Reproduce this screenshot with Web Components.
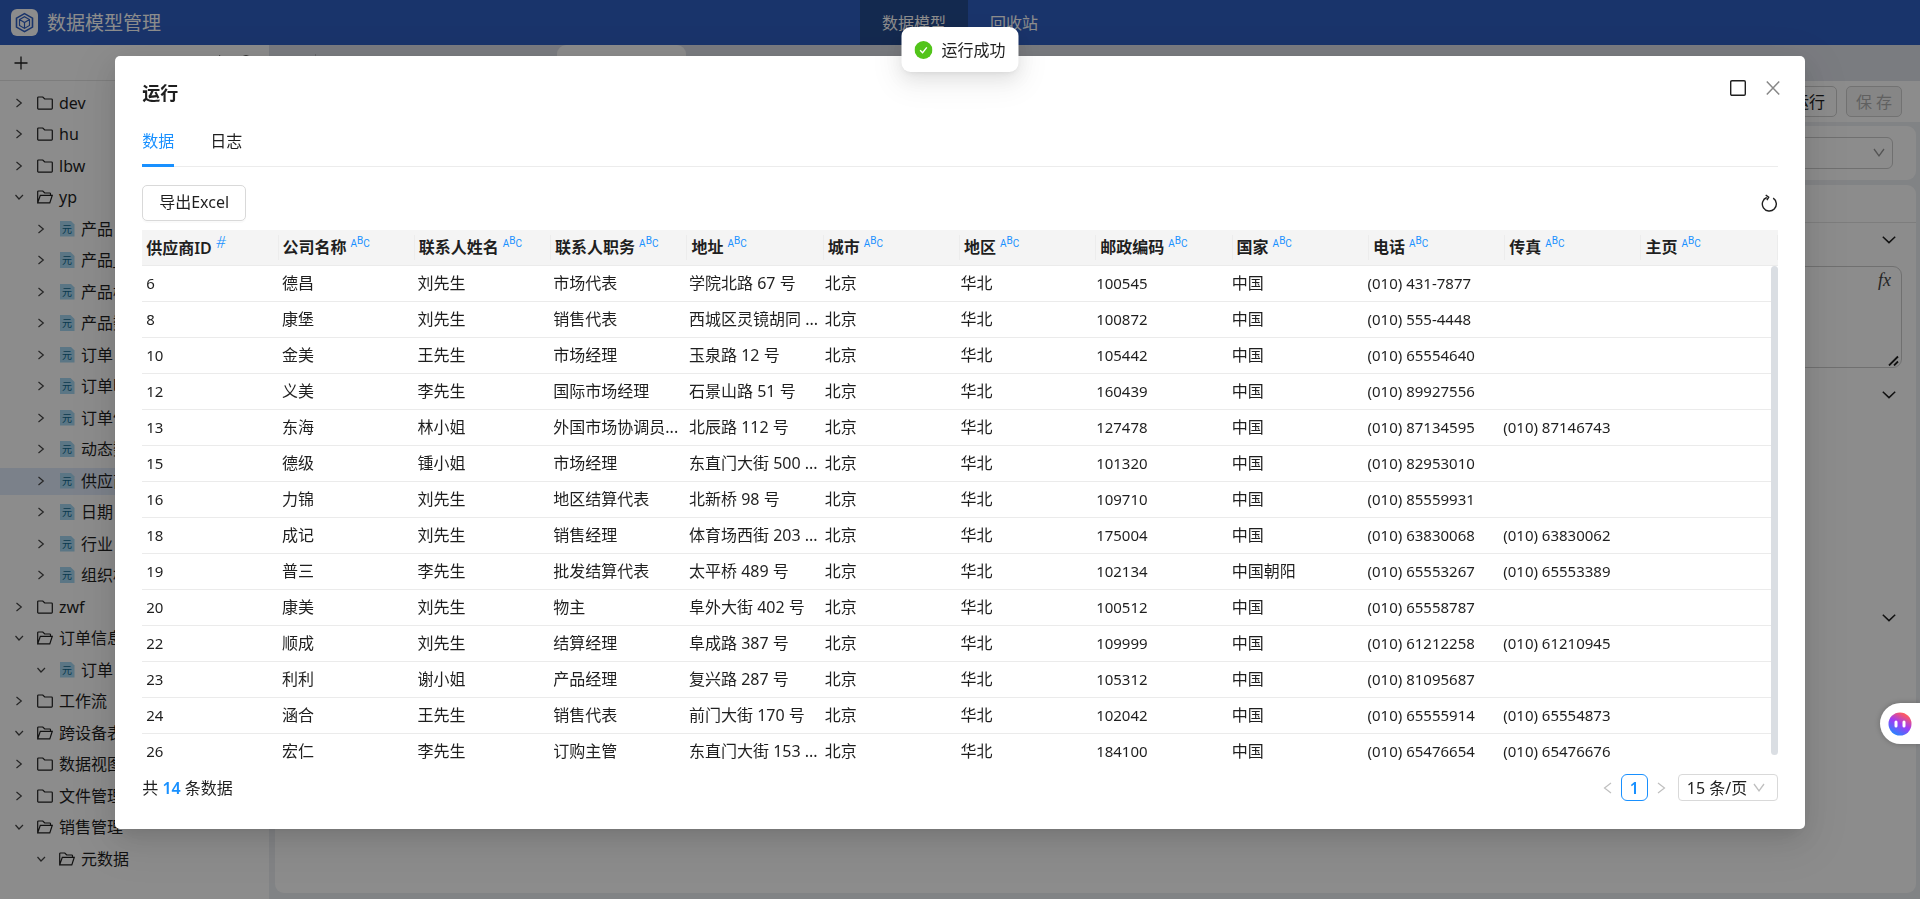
<!DOCTYPE html>
<html lang="zh-CN">
<head>
<meta charset="UTF-8">
<title>数据模型管理</title>
<style>
    body {
        margin: 0;
        font: 16px/24px "Noto Sans", "Noto Sans CJK SC", sans-serif;
        color: #1f1f1f;
        overflow: hidden;
    }
</style>
</head>
<body>
<model-app></model-app>

<script>
const baseStyle = `
    * { box-sizing: border-box; }
    button, select, textarea { font: inherit; color: inherit; margin: 0; }
    button { background: none; border: 0; padding: 0; cursor: pointer; }
    svg { display: block; flex: none; fill: none; stroke: currentColor; }
`;

const icons = {
    logo: `<svg width="27" height="27" viewBox="0 0 27 27" aria-hidden="true">
        <rect width="27" height="27" rx="6" fill="#fff" stroke="none"/>
        <g stroke="#2f5fc3" stroke-width="1.600"><path d="M13.500 4.600l8 4.500v9l-8 4.500-8-4.500v-9z"/>
        <path d="M8.500 10.600l5 2.900 5-2.900M13.500 13.500v6M8.500 10.600v5.800l5 3 5-3v-5.800l-5-2.900z" stroke-width="1.200"/></g></svg>`,
    plus: `<svg width="14" height="14" viewBox="0 0 14 14" stroke-width="1.3"><path d="M7 .5v13M.5 7h13"/></svg>`,
    sync: `<svg width="16" height="16" viewBox="0 0 16 16" stroke-width="1.5"><path d="M6 .8l3 2-3 2M8.500 2.800a5.500 5.500 0 1 1-5 3"/></svg>`,
    search: `<svg width="16" height="16" viewBox="0 0 16 16" stroke-width="1.6"><circle cx="7" cy="6.500" r="5.500"/><path d="M11 10.500l4 4"/></svg>`,
    right: `<svg width="14" height="14" viewBox="0 0 14 14" stroke-width="1.2"><path d="M4.500 3l4.800 4-4.800 4"/></svg>`,
    down: `<svg width="14" height="14" viewBox="0 0 14 14" stroke-width="1.2"><path d="M3.500 5L7 9l4-4"/></svg>`,
    folder: `<svg width="16" height="14" viewBox="0 0 16 14" stroke-width="1.2"><path d="M.7 12.500V1.800q0-.8.800-.8h4.300l1.900 2h6.800q.8 0 .8.800v8.500q0 .8-.8.800H1.500q-.8 0-.8-.8z"/></svg>`,
    folderOpen: `<svg width="16" height="14" viewBox="0 0 16 14" stroke-width="1.2"><path d="M.7 12.900V1.800q0-.8.800-.8h4.300l1.900 2h5q.8 0 .8.800v1.500M.7 12.900l2.600-7.600h12l-2.500 7.600z"/></svg>`,
    refresh: `<svg width="17" height="18" viewBox="0 0 17 18" stroke-width="1.4"><path d="M12.200 4.200a7 7 0 1 1-6.400-.7"/><path d="M4.700 1l3 2.200-1.800 2.900" /></svg>`,
    square: `<svg width="16" height="16" viewBox="0 0 16 16" stroke-width="1.4"><rect x=".7" y=".7" width="14.600" height="14.600" rx="1.200"/></svg>`,
    close: `<svg width="14" height="16" viewBox="0 0 14 16" stroke-width="1.5"><path d="M.8 1.600l12.400 12.800M13.200 1.600L.8 14.400"/></svg>`,
    prev: `<svg width="9" height="12" viewBox="0 0 9 12" stroke-width="1.2"><path d="M8 1L1.500 6 8 11"/></svg>`,
    next: `<svg width="9" height="12" viewBox="0 0 9 12" stroke-width="1.2"><path d="M1 1l6.500 5L1 11"/></svg>`,
    arrow: `<svg width="12" height="10" viewBox="0 0 12 10" stroke-width="1.3"><path d="M1 1l5 7 5-7"/></svg>`,
    fold: `<svg width="14" height="8" viewBox="0 0 14 8" stroke-width="1.5"><path d="M.8 .8L7 6.600 13.200 .8"/></svg>`,
    menu: `<svg width="16" height="14" viewBox="0 0 16 14" stroke-width="1.5"><path d="M0 1h16M0 7h16M0 13h16"/></svg>`,
    success: `<svg width="18" height="18" viewBox="0 0 18 18"><circle cx="9" cy="9" r="9" fill="#52c41a" stroke="none"/><path d="M5.600 9.200l2.500 2.600 4.200-5.400" stroke="#fff" stroke-width="1.400"/></svg>`,
    robot: `<svg width="24" height="24" viewBox="0 0 24 24" aria-hidden="true">
        <defs><linearGradient id="g" x1=".8" y1="0" x2=".25" y2="1"><stop offset=".1" stop-color="#ff5a5f"/><stop offset=".5" stop-color="#a03cf5"/><stop offset="1" stop-color="#1f8bff"/></linearGradient></defs>
        <g stroke="none"><circle cx="12" cy="12" r="11.500" fill="url(#g)"/><rect x="6.500" y="8.500" width="3" height="7" rx="1.500" fill="#fff"/><rect x="14.500" y="8.500" width="3" height="7" rx="1.500" fill="#fff"/></g></svg>`
};

function mount(host, style, html) {
    host.attachShadow({ mode: 'open' });
    host.shadowRoot.innerHTML = `<style>${baseStyle}${style}</style>${html}`;
}

// Top bar with the product name and the two sections
class AppHeader extends HTMLElement {
    connectedCallback() {
        mount(this, `
            :host { display: grid; grid-template-columns: 1fr auto 1fr; height: 45px; background: #2f5fc3; color: #fff; }
            .brand { display: flex; align-items: center; gap: 9px; padding-left: 11px; font-size: 19px; }
            nav { display: flex; }
            a { display: flex; align-items: center; padding: 0 22px; color: inherit; text-decoration: none; }
            a.active { background: #244b90; }
        `, `
            <div class="brand">${icons.logo}<span>数据模型管理</span></div>
            <nav><a class="active" href="#model">数据模型</a><a href="#recycle">回收站</a></nav>
        `);
    }
}
customElements.define('app-header', AppHeader);

// One line of the tree: <tree-node level="1" kind="meta" open>label</tree-node>
class TreeNode extends HTMLElement {
    connectedCallback() {
        const open = this.hasAttribute('open');
        const kind = this.getAttribute('kind');
        const indent = 12 + 22 * Number(this.getAttribute('level') || 0);
        const picture = kind === 'meta' ? '<span class="meta">元</span>' : open ? icons.folderOpen : icons.folder;
        mount(this, `
            :host { display: flex; align-items: center; height: 27px; padding: 0 0 2px ${indent}px; white-space: nowrap; }
            :host([selected]) { background: #e1ebfb; }
            .toggle { margin-right: 11px; color: #444; }
            .picture { width: 16px; margin-right: 6px; display: flex; justify-content: center; }
            .meta {
                width: 15px; height: 16px; background: #a6d8f2; color: #12698f;
                font-size: 10px; line-height: 16px; text-align: center;
                clip-path: polygon(0 0, 11px 0, 15px 4px, 15px 16px, 0 16px);
            }
        `, `
            <button class="toggle" aria-label="展开">${open ? icons.down : icons.right}</button>
            <span class="picture">${picture}</span><slot></slot>
        `);
    }
}
customElements.define('tree-node', TreeNode);

class ModelTree extends HTMLElement {
    // [label, level, kind, open]
    #nodes = [
        ['dev', 0, 'folder'], ['hu', 0, 'folder'], ['lbw', 0, 'folder'], ['yp', 0, 'folder', true],
        ['产品', 1, 'meta'], ['产品_', 1, 'meta'], ['产品模', 1, 'meta'], ['产品数', 1, 'meta'],
        ['订单', 1, 'meta'], ['订单明', 1, 'meta'], ['订单信', 1, 'meta'], ['动态数', 1, 'meta'],
        ['供应商', 1, 'meta'], ['日期', 1, 'meta'], ['行业', 1, 'meta'], ['组织机', 1, 'meta'],
        ['zwf', 0, 'folder'], ['订单信息', 0, 'folder', true], ['订单', 1, 'meta', true],
        ['工作流', 0, 'folder'], ['跨设备表', 0, 'folder', true], ['数据视图', 0, 'folder'],
        ['文件管理', 0, 'folder'], ['销售管理', 0, 'folder', true], ['元数据', 1, 'folder', true]
    ];

    connectedCallback() {
        const items = this.#nodes.map(([label, level, kind, open]) =>
            `<tree-node level="${level}" kind="${kind}" ${open ? 'open' : ''} ${label === '供应商' ? 'selected' : ''}>${label}</tree-node>`
        ).join('');
        mount(this, `
            :host { display: flex; flex-direction: column; background: #fff; }
            .tools { display: flex; align-items: center; gap: 10px; height: 36px; padding: 0 14px; border-bottom: 1px solid #e4e4e4; }
            .tools button:first-child { margin-right: auto; }
            .list { flex: 1; display: flex; flex-direction: column; justify-content: space-between; padding: 9px 0 26px; }
        `, `
            <div class="tools">
                <button aria-label="新建">${icons.plus}</button>
                <button aria-label="刷新">${icons.sync}</button>
                <button aria-label="搜索">${icons.search}</button>
            </div>
            <div class="list">${items}</div>
        `);
    }
}
customElements.define('model-tree', ModelTree);

// Editor behind the dialog
class ModelEditor extends HTMLElement {
    connectedCallback() {
        mount(this, `
            :host { display: flex; flex-direction: column; background: #eceef2; }
            .tabs { display: flex; height: 36px; background: #dfe2ea; padding-left: 16px; }
            .tabs > svg { margin: 11px 14px 0 0; color: #aaa; }
            .tabs > hr { width: 1px; height: 18px; margin: 9px 13px 0 0; border: 0; background: #b8bac0; }
            .tab { width: 114px; padding: 11px 16px; }
            .tab.active { width: 129px; background: #fff; border-radius: 9px 9px 0 0; }
            .tab i { display: block; width: 11px; height: 14px; background: #a6d8f2; }
            .actions { display: flex; justify-content: flex-end; gap: 9px; padding: 5px 18px; background: #fff; }
            .actions button { height: 31px; width: 56px; border: 1px solid #d0d0d0; border-radius: 5px; line-height: 24px; }
            .actions button:disabled { background: #f5f5f5; color: #b0b0b0; }
            .card { background: #fff; margin: 4px 4px 0 6px; border-radius: 9px; }
            .source { padding: 11px 23px; display: grid; align-items: center; }
            .source > * { grid-area: 1 / 1; }
            .source select { height: 32px; border: 1px solid #ccc; border-radius: 6px; appearance: none; background: none; }
            .source svg { justify-self: end; margin-right: 8px; color: #999; }
            .main { flex: 1; margin: 5px 4px 6px 6px; }
            .name { height: 38px; border-bottom: 1px solid #e4e4e4; }
            .section { display: flex; justify-content: flex-end; align-items: center; height: 34px; padding-right: 20px; }
            .box { position: relative; margin: 9px 14px 10px; }
            textarea { display: block; width: 100%; height: 102px; border: 1px solid #ccc; border-radius: 9px; resize: none; }
            .fx { position: absolute; right: 11px; top: 4px; font: italic 18px/20px "Liberation Serif", serif; color: #444; }
            .grip { position: absolute; right: 3px; bottom: 2px; }
            .join { height: 189px; }
        `, `
            <div class="tabs">
                ${icons.menu}<hr>
                <div class="tab"><i></i></div><div class="tab"><i></i></div>
                <div class="tab active"><i></i></div><div class="tab"><i></i></div>
            </div>
            <div class="actions"><button>运行</button><button disabled>保 存</button></div>
            <div class="card source"><select aria-label="数据源"></select>${icons.arrow}</div>
            <div class="card main">
                <div class="name"></div>
                <div class="section">${icons.fold}</div>
                <div class="box">
                    <textarea aria-label="筛选条件"></textarea>
                    <span class="fx">fx</span>
                    <svg class="grip" width="11" height="11" viewBox="0 0 11 11" stroke-width="1.8"><path d="M1 10.500L10 1.500M6 10.500l4-4"/></svg>
                </div>
                <div class="section">${icons.fold}</div>
                <div class="join"></div>
                <div class="section">${icons.fold}</div>
            </div>
        `);
    }
}
customElements.define('model-editor', ModelEditor);

class DataGrid extends HTMLElement {
    #columns = ['供应商ID', '公司名称', '联系人姓名', '联系人职务', '地址', '城市', '地区', '邮政编码', '国家', '电话', '传真', '主页'];
    #rows = [
        ['6', '德昌', '刘先生', '市场代表', '学院北路 67 号', '北京', '华北', '100545', '中国', '(010) 431-7877', '', ''],
        ['8', '康堡', '刘先生', '销售代表', '西城区灵镜胡同 ...', '北京', '华北', '100872', '中国', '(010) 555-4448', '', ''],
        ['10', '金美', '王先生', '市场经理', '玉泉路 12 号', '北京', '华北', '105442', '中国', '(010) 65554640', '', ''],
        ['12', '义美', '李先生', '国际市场经理', '石景山路 51 号', '北京', '华北', '160439', '中国', '(010) 89927556', '', ''],
        ['13', '东海', '林小姐', '外国市场协调员...', '北辰路 112 号', '北京', '华北', '127478', '中国', '(010) 87134595', '(010) 87146743', ''],
        ['15', '德级', '锺小姐', '市场经理', '东直门大街 500 ...', '北京', '华北', '101320', '中国', '(010) 82953010', '', ''],
        ['16', '力锦', '刘先生', '地区结算代表', '北新桥 98 号', '北京', '华北', '109710', '中国', '(010) 85559931', '', ''],
        ['18', '成记', '刘先生', '销售经理', '体育场西街 203 ...', '北京', '华北', '175004', '中国', '(010) 63830068', '(010) 63830062', ''],
        ['19', '普三', '李先生', '批发结算代表', '太平桥 489 号', '北京', '华北', '102134', '中国朝阳', '(010) 65553267', '(010) 65553389', ''],
        ['20', '康美', '刘先生', '物主', '阜外大街 402 号', '北京', '华北', '100512', '中国', '(010) 65558787', '', ''],
        ['22', '顺成', '刘先生', '结算经理', '阜成路 387 号', '北京', '华北', '109999', '中国', '(010) 61212258', '(010) 61210945', ''],
        ['23', '利利', '谢小姐', '产品经理', '复兴路 287 号', '北京', '华北', '105312', '中国', '(010) 81095687', '', ''],
        ['24', '涵合', '王先生', '销售代表', '前门大街 170 号', '北京', '华北', '102042', '中国', '(010) 65555914', '(010) 65554873', ''],
        ['26', '宏仁', '李先生', '订购主管', '东直门大街 153 ...', '北京', '华北', '184100', '中国', '(010) 65476654', '(010) 65476676', '']
    ];

    connectedCallback() {
        mount(this, `
            :host { display: block; position: relative; min-height: 0; }
            table { display: flex; flex-direction: column; height: 100%; }
            thead { display: block; flex: none; }
            tbody { display: block; flex: 1; min-height: 0; overflow-y: auto; scrollbar-width: none; padding-right: 7px; }
            tr { display: table; width: 100%; table-layout: fixed; border-collapse: separate; border-spacing: 0; }
            th, td { height: 36px; padding: 0 0 2px 4px; text-align: left; border-bottom: 1px solid #ebebeb; white-space: nowrap; line-height: 22px; }
            th { position: relative; background: #f4f4f4; font-weight: 600; }
            th::after { content: ""; position: absolute; right: 0; top: 5px; height: 25px; border-right: 1px solid #ececec; }
            td.num { font-size: 15px; }
            .type { margin-left: 4px; color: #1890ff; font: 10px/10px "Liberation Sans Narrow", Roboto, sans-serif; vertical-align: 6px; }
            .type b { font-weight: normal; vertical-align: 3px; }
            .type.hash { font: italic 300 16px/16px "Noto Sans", sans-serif; }
            .thumb { position: absolute; right: 0; top: 36px; bottom: 5px; width: 7px; border-radius: 4px; background: #dadee3; }
        `, `<table><thead><tr></tr></thead><tbody></tbody></table><div class="thumb"></div>`);
        this.#renderHead();
        this.#renderBody();
    }

    #renderHead() {
        const headerRow = this.shadowRoot.querySelector('thead tr');
        this.#columns.forEach((text, index) => {
            const th = document.createElement('th');
            th.innerHTML = text + (index === 0
                ? '<span class="type hash">#</span>'
                : '<span class="type">A<b>B</b>C</span>');
            headerRow.appendChild(th);
        });
    }

    #renderBody() {
        const tbody = this.shadowRoot.querySelector('tbody');
        this.#rows.forEach(values => {
            const row = document.createElement('tr');
            values.forEach(value => {
                const cell = document.createElement('td');
                cell.textContent = value;
                cell.classList.toggle('num', /^[\d() -]+$/.test(value));
                row.appendChild(cell);
            });
            tbody.appendChild(row);
        });
    }
}
customElements.define('data-grid', DataGrid);

class GridPager extends HTMLElement {
    connectedCallback() {
        mount(this, `
            :host { display: flex; align-items: center; height: 27px; }
            .total { margin-right: auto; }
            .total b { color: #1890ff; font-weight: 600; }
            button { color: #bfbfbf; }
            .page { width: 27px; height: 27px; margin: 0 9px; border: 1px solid #1890ff; border-radius: 6px; color: #1890ff; font-weight: 600; line-height: 24px; }
            .size { display: grid; align-items: center; margin-left: 12px; }
            .size > * { grid-area: 1 / 1; }
            select { width: 100px; height: 27px; padding: 0 8px; border: 1px solid #d9d9d9; border-radius: 4px; background: none; appearance: none; line-height: 24px; }
            .size svg { justify-self: end; margin-right: 13px; color: #bfbfbf; pointer-events: none; }
        `, `
            <span class="total">共 <b>14</b> 条数据</span>
            <button aria-label="上一页">${icons.prev}</button>
            <button class="page">1</button>
            <button aria-label="下一页">${icons.next}</button>
            <label class="size"><select aria-label="每页条数"><option>15 条/页</option></select>${icons.arrow}</label>
        `);
    }
}
customElements.define('grid-pager', GridPager);

class RunDialog extends HTMLElement {
    connectedCallback() {
        mount(this, `
            :host {
                display: flex; flex-direction: column; width: 88vw; height: 86vh;
                background: #fff; border-radius: 5px;
                box-shadow: 0 6px 16px -8px rgba(0,0,0,.12), 0 9px 28px rgba(0,0,0,.1), 0 12px 48px 16px rgba(0,0,0,.06);
            }
            header { display: flex; align-items: flex-start; gap: 20px; padding: 24px 25px 0 27px; }
            h2 { flex: 1; margin: 0; font-size: 18px; line-height: 26px; }
            .close { color: #888; }
            .tabs { display: flex; gap: 36px; margin: 15px 27px 18px; border-bottom: 1px solid #ececec; }
            .tabs button { height: 46px; margin-bottom: -1px; padding-bottom: 4px; border-bottom: 3px solid transparent; }
            .tabs .active { color: #1890ff; border-color: #1890ff; }
            .toolbar { display: flex; justify-content: space-between; align-items: center; margin: 0 27px 9px; }
            .export { height: 36px; padding: 0 16px 2px; border: 1px solid #d9d9d9; border-radius: 5px; box-shadow: 0 2px 0 rgba(0,0,0,.02); }
            ::slotted(data-grid) { flex: 1; margin: 0 27px; }
            ::slotted(grid-pager) { flex: none; margin: 14px 27px 28px; }
        `, `
            <header>
                <h2>运行</h2>
                <button aria-label="最大化">${icons.square}</button>
                <button class="close" aria-label="关闭">${icons.close}</button>
            </header>
            <div class="tabs" role="tablist">
                <button class="active" role="tab">数据</button>
                <button role="tab">日志</button>
            </div>
            <div class="toolbar">
                <button class="export">导出Excel</button>
                <button aria-label="刷新数据">${icons.refresh}</button>
            </div>
            <slot></slot>
        `);
    }
}
customElements.define('run-dialog', RunDialog);

class ToastMessage extends HTMLElement {
    connectedCallback() {
        mount(this, `
            :host {
                display: flex; align-items: center; gap: 9px; height: 45px; padding: 0 13px;
                background: #fff; border-radius: 9px;
                box-shadow: 0 6px 18px rgba(0,0,0,.08), 0 3px 6px -4px rgba(0,0,0,.12), 0 9px 28px 8px rgba(0,0,0,.05);
            }
        `, `${icons.success}<slot></slot>`);
    }
}
customElements.define('toast-message', ToastMessage);

class ModelApp extends HTMLElement {
    connectedCallback() {
        mount(this, `
            :host { display: flex; flex-direction: column; height: 100vh; }
            main { flex: 1; display: flex; min-height: 0; }
            model-tree { flex: none; width: 269px; }
            model-editor { flex: 1; }
            .mask { position: fixed; inset: 0; padding-top: 56px; background: rgba(0,0,0,.45); display: flex; justify-content: center; align-items: flex-start; }
            toast-message { position: fixed; top: 27px; left: 50%; transform: translateX(-50%); }
            .robot {
                position: fixed; right: 0; top: 703px; width: 40px; height: 41px; padding-left: 8px;
                display: flex; align-items: center; background: #fff;
                border-radius: 21px 0 0 21px; box-shadow: 0 0 6px rgba(0,0,0,.25);
            }
        `, `
            <app-header></app-header>
            <main><model-tree></model-tree><model-editor></model-editor></main>
            <div class="mask">
                <run-dialog role="dialog" aria-label="运行">
                    <data-grid></data-grid>
                    <grid-pager></grid-pager>
                </run-dialog>
            </div>
            <button class="robot" aria-label="智能助手">${icons.robot}</button>
            <toast-message role="status">运行成功</toast-message>
        `);
    }
}
customElements.define('model-app', ModelApp);
</script>
</body>
</html>
